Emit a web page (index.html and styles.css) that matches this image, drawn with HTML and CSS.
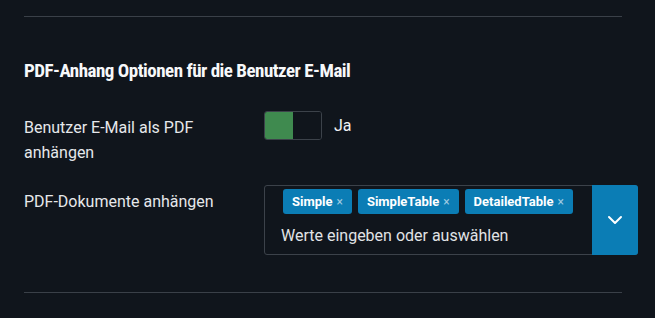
FILE: index.html
```html
<!DOCTYPE html>
<html lang="de">

<head>
    <meta charset="UTF-8">
    <title>PDF-Anhang Optionen</title>
    <link rel="stylesheet" href="styles.css">
</head>

<body>
    <section class="panel">
        <hr class="divider">

        <h2 class="panel__title">PDF-Anhang Optionen für die Benutzer E-Mail</h2>

        <div class="field">
            <label class="field__label">Benutzer E-Mail als PDF anhängen</label>
            <div class="field__control">
                <div class="toggle">
                    <span class="toggle__on"></span>
                    <span class="toggle__off"></span>
                </div>
                <span class="toggle__text">Ja</span>
            </div>
        </div>

        <div class="field">
            <label class="field__label">PDF-Dokumente anhängen</label>
            <div class="field__control">
                <div class="multiselect">
                    <div class="multiselect__body">
                        <div class="chips">
                            <span class="chip">Simple <span class="chip__x">×</span></span>
                            <span class="chip">SimpleTable <span class="chip__x">×</span></span>
                            <span class="chip">DetailedTable <span class="chip__x">×</span></span>
                        </div>
                        <input class="multiselect__input" type="text" placeholder="Werte eingeben oder auswählen">
                    </div>
                    <button class="multiselect__btn" title="Öffnen">
                        <svg width="16" height="10" viewBox="0 0 16 10">
                            <path d="M2 2 L8 8 L14 2" fill="none" stroke="#fff" stroke-width="2" stroke-linecap="round" stroke-linejoin="round" />
                        </svg>
                    </button>
                </div>
            </div>
        </div>

        <hr class="divider divider--bottom">
    </section>
</body>

</html>
```

FILE: styles.css
```css
html {
    box-sizing: border-box;
}

*,
*:before,
*:after {
    box-sizing: inherit;
}

body {
    margin: 0;
    padding: 0;
    min-height: 100vh;
    background: #10151c;
    color: #f1f3f5;
    font-family: Roboto, "Liberation Sans", sans-serif;
}

.panel {
    padding: 16px 33px 0 24px;
}

.divider {
    margin: 0;
    border: 0;
    height: 1px;
    background: #3a4048;
}

.divider--bottom {
    margin-top: 37px;
}

.panel__title {
    margin: 42px 0 0;
    font-size: 19px;
    font-weight: 700;
    font-stretch: 75%;
    letter-spacing: -0.5px;
    line-height: 24px;
    color: #f7f8fa;
}

.field {
    display: flex;
    margin-top: 28px;
}

.field+.field {
    margin-top: 20px;
}

.field__label {
    width: 240px;
    flex: none;
    font-size: 16px;
    line-height: 25px;
    color: #e6e8eb;
    padding-top: 4px;
    padding-right: 20px;
}

.field__control {
    display: flex;
    align-items: flex-start;
    flex: 1;
}

/* toggle switch */

.toggle {
    display: flex;
    width: 58px;
    height: 29px;
    border: 1px solid #3c424a;
    border-radius: 3px;
    overflow: hidden;
}

.toggle__on {
    flex: 1;
    background: #3f8a4f;
}

.toggle__off {
    flex: 1;
    background: #10151c;
}

.toggle__text {
    margin-left: 12px;
    font-size: 16px;
    line-height: 29px;
    color: #f1f3f5;
}

/* multiselect */

.multiselect {
    display: flex;
    width: 374px;
    height: 70px;
    border: 1px solid #3c424a;
    border-radius: 3px;
}

.multiselect__body {
    flex: 1;
    padding: 3px 0 0 18px;
}

.chips {
    display: flex;
    gap: 6px;
}

.chip {
    display: inline-flex;
    align-items: center;
    height: 25px;
    padding: 0 9px 0 9px;
    border-radius: 3px;
    background: #0b7db5;
    color: #fff;
    font-size: 13px;
    font-weight: 700;
}

.chip__x {
    margin-left: 4px;
    font-weight: 400;
    font-size: 12px;
    color: #9fcbe2;
}

.multiselect__input {
    display: block;
    width: 100%;
    margin-top: 11px;
    margin-left: -2px;
    padding: 0;
    border: 0;
    outline: 0;
    background: transparent;
    font-family: inherit;
    font-size: 16px;
    line-height: 22px;
    color: #e6e8eb;
}

.multiselect__input::placeholder {
    color: #e1e3e6;
}

.multiselect__btn {
    width: 46px;
    margin: -1px -1px -1px 0;
    border: 0;
    border-radius: 0 3px 3px 0;
    background: #0b7db5;
    display: flex;
    align-items: center;
    justify-content: center;
    cursor: pointer;
}
```
